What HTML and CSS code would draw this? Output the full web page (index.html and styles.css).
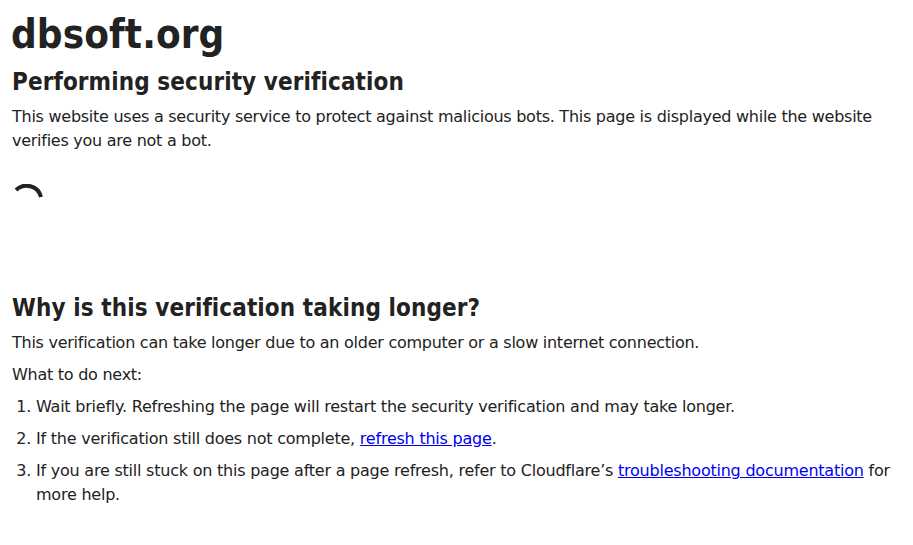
FILE: index.html
```html
<!DOCTYPE html>
<html>
  <head>
    <title>dbsoft.org</title>
    <link rel="stylesheet" href="styles.css">
  </head>
  <body>
    <div class="main">
      <h1 class="site-name">dbsoft.org</h1>
      <h2 class="heading">Performing security verification</h2>
      <p class="text">This website uses a security service to protect against malicious bots. This page is displayed while the website verifies you are not a bot.</p>
      <div class="spinner-box">
        <svg class="spinner" width="32" height="14" viewBox="0 0 32 14">
          <path d="M4 6 A 15 15 0 0 1 29 13" fill="none" stroke="#222" stroke-width="4"/>
        </svg>
      </div>
      <h2 class="heading">Why is this verification taking longer?</h2>
      <p class="text">This verification can take longer due to an older computer or a slow internet connection.</p>
      <p class="text">What to do next:</p>
      <ol class="steps">
        <li>Wait briefly. Refreshing the page will restart the security verification and may take longer.</li>
        <li>If the verification still does not complete, <a href="#">refresh this page</a>.</li>
        <li>If you are still stuck on this page after a page refresh, refer to Cloudflare’s <a href="#">troubleshooting documentation</a> for more help.</li>
      </ol>
    </div>
  </body>
</html>
```
FILE: styles.css
```css
html, body {
  margin: 0;
  padding: 0;
}
body {
  background: #fff;
  color: #222;
  font: 16px/24px "DejaVu Sans", Verdana, sans-serif;
}
.main {
  padding: 9px 12px 0 12px;
}
.site-name {
  font-family: "DejaVu Sans Condensed", "DejaVu Sans", sans-serif;
  font-size: 40px;
  line-height: 50px;
  font-weight: bold;
  letter-spacing: 0.1px;
  margin: 0 0 8px -1px;
}
.heading {
  font-family: "DejaVu Sans Condensed", "DejaVu Sans", sans-serif;
  font-size: 24px;
  line-height: 30px;
  font-weight: bold;
  letter-spacing: 0.1px;
  margin: 0 0 8px 0;
}
.text {
  letter-spacing: -0.26px;
  margin: 0 0 8px 0;
}
.spinner-box {
  height: 91px;
  padding-top: 23px;
  margin-bottom: 18px;
}
.spinner {
  display: block;
}
.steps {
  letter-spacing: -0.225px;
  margin: 0;
  padding-left: 24px;
}
.steps li {
  margin-bottom: 8px;
}
a {
  color: #0000ee;
}
```
